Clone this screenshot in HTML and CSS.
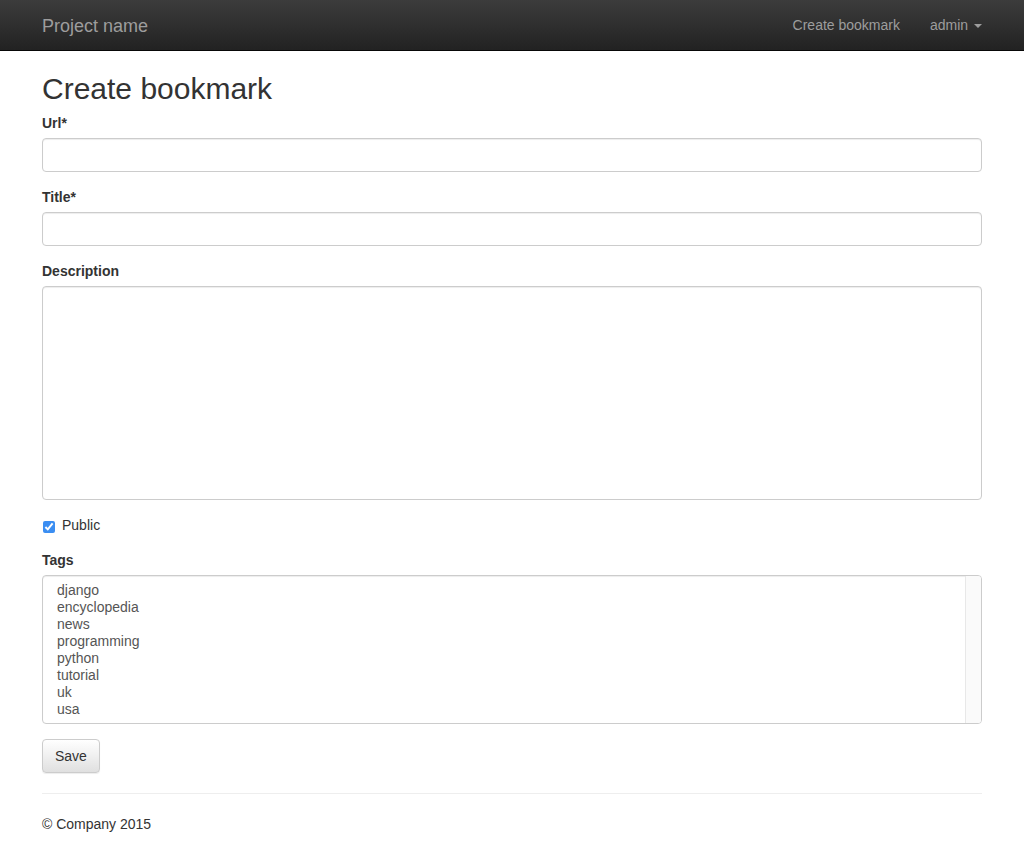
FILE: index.html
```html
<!DOCTYPE html>
<html lang="en">
<head>
<meta charset="utf-8">
<title>Create bookmark</title>
<link rel="stylesheet" href="styles.css">
</head>
<body>
<nav class="navbar">
  <div class="container navbar-inner">
    <a class="brand" href="#">Project name</a>
    <ul class="nav-right">
      <li><a href="#">Create bookmark</a></li>
      <li><a href="#">admin <span class="caret"></span></a></li>
    </ul>
  </div>
</nav>
<main class="container">
  <h1 class="page-title">Create bookmark</h1>
  <form class="form">
    <div class="form-group">
      <label class="control-label" for="url">Url*</label>
      <input class="form-control" id="url" type="text">
    </div>
    <div class="form-group">
      <label class="control-label" for="title">Title*</label>
      <input class="form-control" id="title" type="text">
    </div>
    <div class="form-group">
      <label class="control-label" for="desc">Description</label>
      <textarea class="form-control textarea" id="desc" rows="10"></textarea>
    </div>
    <div class="form-group">
      <div class="checkbox">
        <label><input type="checkbox" checked> Public</label>
      </div>
    </div>
    <div class="form-group">
      <label class="control-label" for="tags">Tags</label>
      <div class="select-wrap">
        <select class="form-control tags" id="tags" multiple size="8">
          <option>django</option>
          <option>encyclopedia</option>
          <option>news</option>
          <option>programming</option>
          <option>python</option>
          <option>tutorial</option>
          <option>uk</option>
          <option>usa</option>
        </select>
      </div>
    </div>
    <button class="btn" type="button">Save</button>
  </form>
  <hr class="rule">
  <footer class="footer">
    <p>&copy; Company 2015</p>
  </footer>
</main>
</body>
</html>
```
FILE: styles.css
```css
* { box-sizing: border-box; }
html, body { margin: 0; padding: 0; }
body {
  font-family: "Liberation Sans", Arial, sans-serif;
  font-size: 14px;
  line-height: 20px;
  color: #333;
  background: #fff;
}
a { text-decoration: none; }
.container {
  width: 970px;
  margin: 0 auto;
  padding: 0 15px;
}
.navbar {
  height: 51px;
  background: linear-gradient(to bottom, #3c3c3c 0%, #222 100%);
  border-bottom: 1px solid #080808;
}
.navbar-inner {
  display: flex;
  justify-content: space-between;
  align-items: stretch;
  height: 50px;
}
.brand {
  font-size: 18px;
  line-height: 20px;
  padding: 16px 0 14px;
  color: #9d9d9d;
}
.nav-right {
  list-style: none;
  margin: 0 -15px 0 0;
  padding: 0;
  display: flex;
}
.nav-right a {
  display: block;
  padding: 15px;
  line-height: 20px;
  color: #9d9d9d;
}
.caret {
  display: inline-block;
  width: 0;
  height: 0;
  margin-left: 2px;
  vertical-align: middle;
  border-top: 4px solid #9d9d9d;
  border-left: 4px solid transparent;
  border-right: 4px solid transparent;
}
.page-title {
  font-size: 30px;
  font-weight: 500;
  line-height: 33px;
  margin: 21px 0 8px;
  color: #333;
}
.form { margin: 0; }
.form-group { margin-bottom: 15px; }
.control-label {
  display: inline-block;
  font-weight: bold;
  margin-bottom: 5px;
}
.form-control {
  display: block;
  width: 100%;
  height: 34px;
  padding: 6px 12px;
  font-family: inherit;
  font-size: 14px;
  line-height: 20px;
  color: #555;
  background: #fff;
  border: 1px solid #ccc;
  border-radius: 4px;
  box-shadow: inset 0 1px 1px rgba(0,0,0,.075);
  margin: 0;
}
.textarea {
  height: 214px;
  resize: none;
}
.checkbox {
  margin: 10px 0;
}
.checkbox label {
  display: block;
  padding-left: 20px;
  font-weight: normal;
  min-height: 20px;
}
.checkbox input {
  margin: 6px 0 0 -19px;
  float: left;
  width: 12px;
  height: 12px;
  accent-color: #3b8ef2;
}
.select-wrap {
  position: relative;
}
.select-wrap::after {
  content: "";
  position: absolute;
  top: 1px;
  right: 1px;
  bottom: 1px;
  width: 15px;
  background: #fafafa;
  border-left: 1px solid #e8e8e8;
  border-radius: 0 3px 3px 0;
  pointer-events: none;
}
.tags {
  height: 149px;
  overflow-y: hidden;
  padding: 6px 0 6px 12px;
}
.tags option {
  padding: 0 2px 1px;
  line-height: 16px;
  color: #555;
}
.btn {
  display: inline-block;
  height: 34px;
  padding: 6px 12px;
  font-family: inherit;
  font-size: 14px;
  line-height: 20px;
  color: #333;
  background: linear-gradient(to bottom, #fff 0%, #e0e0e0 100%);
  border: 1px solid #ccc;
  border-radius: 4px;
  box-shadow: inset 0 1px 0 rgba(255,255,255,.15), 0 1px 1px rgba(0,0,0,.075);
  cursor: pointer;
}
.rule {
  margin: 20px 0;
  border: 0;
  border-top: 1px solid #eee;
}
.footer p {
  margin: 0 0 10px;
}
```
